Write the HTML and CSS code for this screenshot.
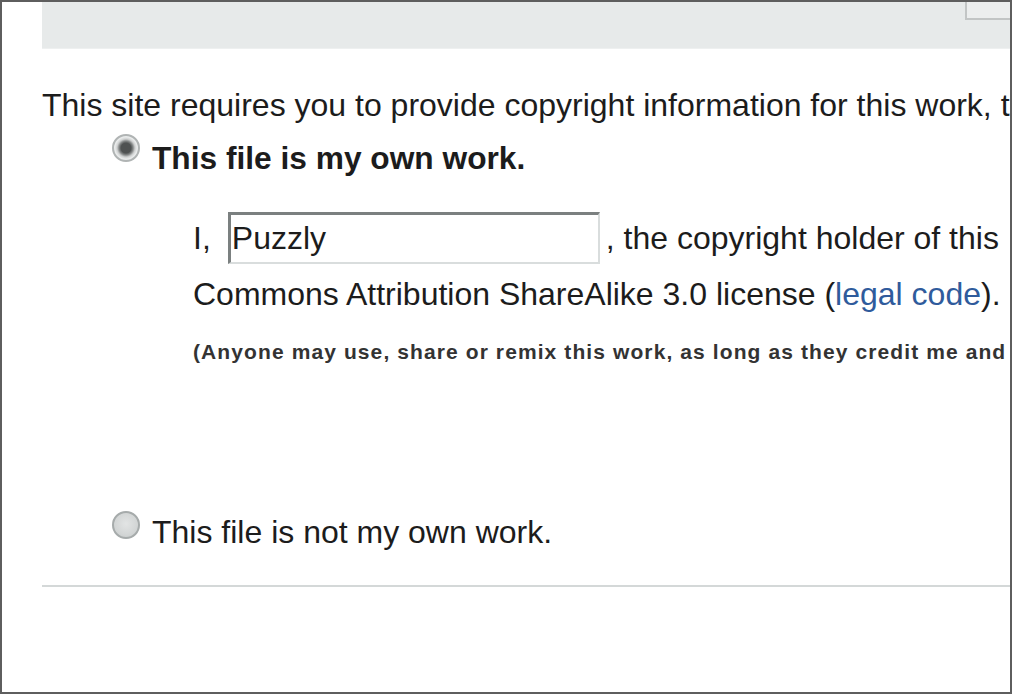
FILE: index.html
```html
<!DOCTYPE html>
<html>
<head>
<meta charset="utf-8">
<link rel="stylesheet" href="styles.css">
</head>
<body>
<div class="frame">
  <div class="panel"><div class="panel-btn"></div></div>
  <p class="intro">This site requires you to provide copyright information for this work, to</p>
  <div class="option first">
    <span class="radio checked"></span>
    <span class="opt-label bold">This file is my own work.</span>
  </div>
  <div class="details">
    <div class="line1">
      <span class="pre">I,</span>
      <span class="input">Puzzly</span>
      <span class="post">, the copyright holder of this</span>
    </div>
    <div class="line2">Commons Attribution ShareAlike 3.0 license (<a href="#">legal code</a>).</div>
    <div class="note">(Anyone may use, share or remix this work, as long as they credit me and</div>
  </div>
  <div class="option second">
    <span class="radio"></span>
    <span class="opt-label">This file is not my own work.</span>
  </div>
  <hr class="rule">
</div>
</body>
</html>
```
FILE: styles.css
```css
html, body {
  margin: 0;
  padding: 0;
  background: #fff;
}
body {
  width: 1012px;
  height: 694px;
  overflow: hidden;
}
.frame {
  box-sizing: border-box;
  width: 1012px;
  height: 694px;
  border: 2px solid #5e5e5e;
  overflow: hidden;
  padding-left: 40px;
  font-family: "Liberation Sans", Arial, sans-serif;
  color: #1c1c1c;
  white-space: nowrap;
}
.panel {
  height: 46px;
  background: #e7eaea;
  border-bottom: 1px solid #eef0f0;
  display: flex;
  justify-content: flex-end;
}
.panel-btn {
  width: 43px;
  height: 16px;
  border-left: 2px solid #c2c5c5;
  border-bottom: 2px solid #c2c5c5;
  background: #eceeee;
}
.intro {
  margin: 38px 0 0 0;
  font-size: 32px;
  line-height: 36px;
}
.option {
  display: flex;
  align-items: flex-start;
  margin-left: 70px;
  gap: 12px;
}
.option.first {
  margin-top: 17px;
}
.radio {
  width: 28px;
  height: 28px;
  border-radius: 50%;
  box-sizing: border-box;
  background: radial-gradient(circle at 50% 45%, #e2e4e4 0%, #d3d6d6 60%, #c4c8c8 100%);
  border: 2px solid #a6abab;
  flex: none;
  margin-top: -3px;
}
.radio.checked {
  background: radial-gradient(circle, #4f5252 0 5px, #858888 7px, #cfd1d1 9px, #e9ebeb 11px, #dfe1e1 100%);
  border-color: #b0b4b4;
  margin-top: -6px;
}
.opt-label {
  font-size: 32px;
  line-height: 36px;
}
.opt-label.bold {
  font-weight: bold;
  font-size: 31.7px;
}
.details {
  margin-left: 151px;
  margin-top: 36px;
  font-size: 32px;
}
.line1 {
  display: flex;
  align-items: center;
  line-height: 36px;
}
.input {
  box-sizing: border-box;
  width: 372px;
  height: 52px;
  border-top: 3px solid #7b8080;
  border-left: 3px solid #7b8080;
  border-right: 2px solid #d9dddd;
  border-bottom: 2px solid #d9dddd;
  padding: 5px 0 0 1px;
  margin-left: 17px;
  margin-right: 6px;
  line-height: 36px;
}
.line2 {
  margin-top: 12px;
  line-height: 36px;
}
.line2 a {
  color: #2f5b9c;
  text-decoration: none;
}
.note {
  margin-top: 28px;
  font-size: 21px;
  line-height: 24px;
  font-weight: bold;
  letter-spacing: 1.1px;
  color: #333;
}
.option.second {
  margin-top: 150px;
}
.rule {
  margin: 35px 0 0 0;
  border: none;
  height: 2px;
  background: #d4d8d8;
}
```
